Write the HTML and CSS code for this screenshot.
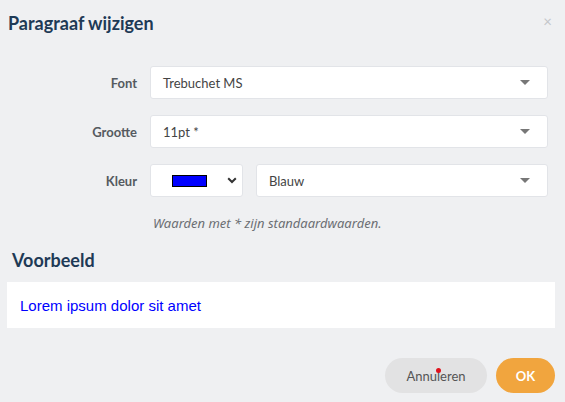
FILE: index.html
```html
<!DOCTYPE html>
<html lang="nl">
<head>
<meta charset="utf-8">
<title>Paragraaf wijzigen</title>
<link rel="stylesheet" href="styles.css">
</head>
<body>
<div class="dialog">
  <div class="header">
    <h1 class="title">Paragraaf wijzigen</h1>
    <span class="close">&#215;</span>
  </div>
  <div class="form">
    <div class="row">
      <label class="label">Font</label>
      <div class="select wide"><span>Trebuchet MS</span><span class="caret"></span></div>
    </div>
    <div class="row">
      <label class="label">Grootte</label>
      <div class="select wide"><span>11pt *</span><span class="caret"></span></div>
    </div>
    <div class="row">
      <label class="label">Kleur</label>
      <div class="colorpick">
        <span class="swatch"></span>
        <svg class="chev" width="10" height="7" viewBox="0 0 10 7"><path d="M1.2 1.2 L5 5 L8.8 1.2" fill="none" stroke="#333" stroke-width="2"/></svg>
      </div>
      <div class="select wide"><span>Blauw</span><span class="caret"></span></div>
    </div>
    <div class="row">
      <span class="label"></span>
      <p class="hint">Waarden met * zijn standaardwaarden.</p>
    </div>
  </div>
  <h2 class="subtitle">Voorbeeld</h2>
  <div class="preview"><span class="sample">Lorem ipsum dolor sit amet</span></div>
  <div class="footer">
    <button class="btn cancel">Annuleren<span class="dot"></span></button>
    <button class="btn ok">OK</button>
  </div>
</div>
</body>
</html>
```
FILE: styles.css
```css
html, body {
  margin: 0;
  padding: 0;
  background: #eff0f2;
}
body {
  font-family: Lato, "Noto Sans", sans-serif;
  width: 565px;
  height: 402px;
  overflow: hidden;
}
.header {
  display: flex;
  justify-content: space-between;
  align-items: flex-start;
  padding: 11px 13px 0 8px;
  height: 55px;
  box-sizing: border-box;
}
.title {
  margin: 0;
  font-size: 18px;
  font-weight: 700;
  color: #1e3a56;
  line-height: 24px;
}
.close {
  color: #c4c6ca;
  font-size: 15px;
  line-height: 15px;
  margin-top: 3px;
}
.form {
  display: flex;
  flex-direction: column;
  gap: 16px;
  padding: 11px 17px 0 0;
}
.row {
  display: flex;
  align-items: center;
  gap: 13px;
}
.label {
  width: 137px;
  text-align: right;
  font-size: 13px;
  font-weight: 700;
  color: #555a60;
}
.select {
  box-sizing: border-box;
  height: 33px;
  background: #fff;
  border: 1px solid #e2e4e8;
  border-radius: 3px;
  display: flex;
  align-items: center;
  justify-content: space-between;
  padding: 0 17px 0 12px;
  font-size: 13px;
  color: #444;
}
.wide {
  flex: 1;
}
.caret {
  width: 0;
  height: 0;
  border-left: 5px solid transparent;
  border-right: 5px solid transparent;
  border-top: 5px solid #777;
}
.colorpick {
  box-sizing: border-box;
  width: 93px;
  height: 33px;
  background: #fff;
  border: 1px solid #e2e4e8;
  border-radius: 3px;
  display: flex;
  align-items: center;
  padding: 0 5px 0 21px;
  gap: 20px;
}
.swatch {
  box-sizing: border-box;
  width: 35px;
  height: 12px;
  background: #0000ff;
  border: 1px solid #000;
}
.hint {
  margin: 1px 0 0 3px;
  font-family: "Noto Sans", sans-serif;
  font-size: 13px;
  font-style: italic;
  color: #6b6e72;
}
.subtitle {
  margin: 16px 0 0 12px;
  font-size: 18px;
  font-weight: 700;
  color: #1e3a56;
  line-height: 24px;
}
.preview {
  margin: 10px 10px 0 7px;
  height: 46px;
  background: #fff;
  display: flex;
  align-items: center;
  padding-left: 13px;
}
.sample {
  font-family: "Liberation Sans", sans-serif;
  font-size: 15px;
  color: #0000ff;
}
.footer {
  display: flex;
  justify-content: flex-end;
  gap: 9px;
  padding: 30px 10px 0 0;
}
.btn {
  position: relative;
  border: none;
  height: 35px;
  border-radius: 18px;
  font-family: Lato, "Noto Sans", sans-serif;
  font-size: 13px;
}
.cancel {
  width: 102px;
  background: #e2e2e3;
  color: #555;
}
.ok {
  width: 59px;
  background: #f1a53e;
  color: #fff;
  font-weight: 700;
}
.dot {
  position: absolute;
  left: 51px;
  top: 10px;
  width: 5px;
  height: 5px;
  border-radius: 50%;
  background: #e0121c;
}
```
